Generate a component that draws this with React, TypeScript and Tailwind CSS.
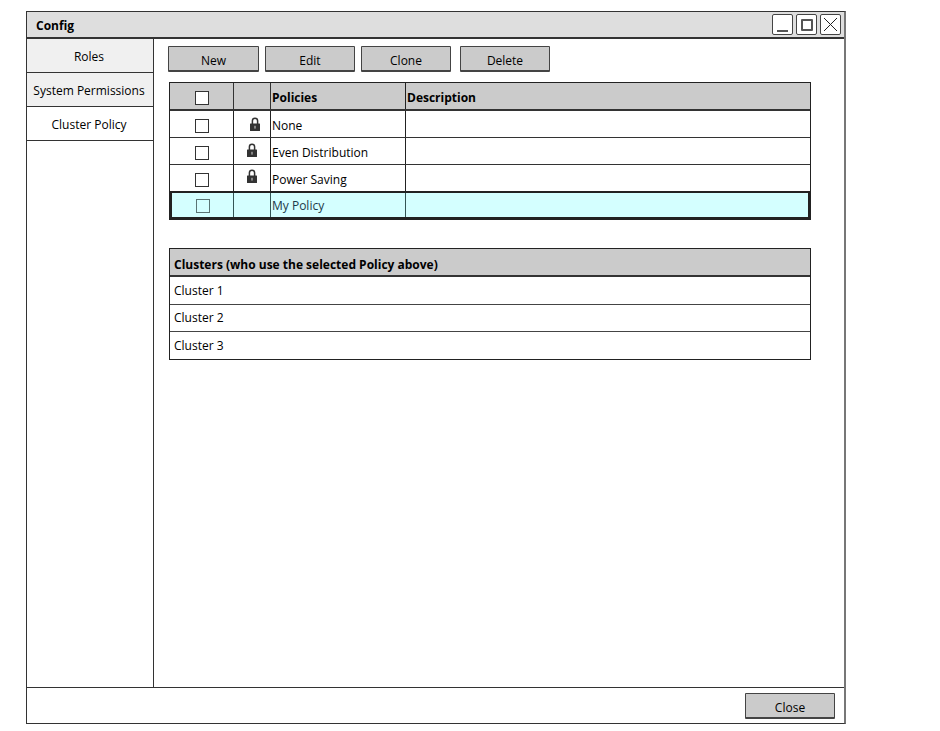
const font = 'font-["Open_Sans","Liberation_Sans",sans-serif]';

function Btn({ label, className = 'w-[91px]' }: { label: string; className?: string }) {
  return (
    <button className={`flex h-[26px] items-center justify-center rounded-[1px] border border-[#444] border-b-2 bg-[#cbcbcb] pt-[5px] text-[12px] text-black ${className}`}>
      {label}
    </button>
  );
}

function Check({ tint = false }: { tint?: boolean }) {
  return <span className={`block h-[14px] w-[14px] border ${tint ? 'border-[#5a7474] bg-[#d4ffff]' : 'border-[#333] bg-white'}`} />;
}

function LockIcon() {
  return (
    <svg width="10" height="14" viewBox="0 0 10 14" className="block">
      <path d="M2.4 7V3.8a2.6 2.6 0 0 1 5.2 0V7" fill="none" stroke="#333" strokeWidth="1.5" />
      <rect x="0" y="6.5" width="10" height="7.5" rx="0.5" fill="#333" />
      <rect x="4.2" y="8.8" width="1.6" height="2.8" fill="#999" />
    </svg>
  );
}

const policies = [
  { name: 'None', iconClass: 'ml-[5px]' },
  { name: 'Even Distribution', iconClass: '-mt-[2px]' },
  { name: 'Power Saving', iconClass: '-mt-[4px]' },
];

function WinButton({ children }: { children: React.ReactNode }) {
  return (
    <span className="flex h-[21px] w-[21px] items-center justify-center rounded-[2px] border border-[#444] bg-white">
      {children}
    </span>
  );
}

export default function App() {
  return (
    <div className={`h-[731px] w-[940px] bg-white pl-[26px] pt-[11px] ${font}`}>
      <div className="flex h-[713px] w-[820px] flex-col border border-[#333] border-r-2 border-r-[#777]">
        <div className="flex h-[27px] shrink-0 items-center justify-between border-b-2 border-[#333] bg-[#dedede] pl-[9px] pr-[3px]">
          <span className="pt-[2px] text-[12px] font-bold text-black">Config</span>
          <div className="flex gap-[3px]">
            <WinButton>
              <span className="mt-[12px] block h-[2px] w-[11px] bg-[#555]" />
            </WinButton>
            <WinButton>
              <span className="block h-[12px] w-[12px] rounded-[1px] border-2 border-[#555]" />
            </WinButton>
            <WinButton>
              <svg width="15" height="15" viewBox="0 0 15 15">
                <path d="M1 1l13 13M14 1L1 14" stroke="#222" strokeWidth="1" />
              </svg>
            </WinButton>
          </div>
        </div>

        <div className="flex min-h-0 flex-1">
          <div className="w-[127px] shrink-0 border-r border-[#333] text-[12px] text-black">
            <div className="flex h-[34px] items-center justify-center border-b border-[#333] bg-[#f0f0f0] pr-[2px] pt-[3px]">Roles</div>
            <div className="flex h-[34px] items-center justify-center border-b border-[#333] bg-[#f0f0f0] pr-[2px] pt-[3px]">System Permissions</div>
            <div className="flex h-[34px] items-center justify-center border-b border-[#333] bg-white pr-[2px] pt-[3px]">Cluster Policy</div>
          </div>

          <div className="flex-1 pl-[14px] pt-[7px]">
            <div className="flex">
              <Btn label="New" />
              <Btn label="Edit" className="ml-[6px] w-[90px]" />
              <Btn label="Clone" className="ml-[6px] w-[90px]" />
              <Btn label="Delete" className="ml-[9px] w-[90px]" />
            </div>

            <div className="ml-[1px] mt-[10px] w-[642px] border border-[#222] text-[12px] text-black">
              <div className="grid h-[28px] grid-cols-[64px_37px_135px_1fr] border-b-2 border-[#333] bg-[#cbcbcb] font-bold">
                <div className="flex items-center justify-center border-r border-[#333] pt-[4px]"><Check /></div>
                <div className="border-r border-[#333]" />
                <div className="flex items-center border-r border-[#222] pl-[1px] pt-[4px]">Policies</div>
                <div className="flex items-center pl-[1px] pt-[4px]">Description</div>
              </div>
              {policies.map((p) => (
                <div key={p.name} className="grid h-[27px] grid-cols-[64px_37px_135px_1fr] border-b border-[#333]">
                  <div className="flex items-center justify-center border-r border-[#222] pt-[3px]"><Check /></div>
                  <div className="flex items-center justify-center border-r border-[#222]">
                    <span className={p.iconClass}><LockIcon /></span>
                  </div>
                  <div className="flex items-center border-r border-[#222] pl-[1px] pt-[4px]">{p.name}</div>
                  <div />
                </div>
              ))}
              <div className="-mt-[1px] grid h-[28px] grid-cols-[62px_37px_135px_1fr] border-2 border-[#222] bg-[#d4ffff] text-[#1c3a4a]">
                <div className="flex items-center justify-center border-r border-[#355] pt-[2px]"><Check tint /></div>
                <div className="border-r border-[#355]" />
                <div className="flex items-center border-r border-[#355] pl-[1px] pt-[2px]">My Policy</div>
                <div />
              </div>
            </div>

            <div className="ml-[1px] mt-[28px] w-[642px] border border-[#222] text-[12px] text-black">
              <div className="flex h-[28px] items-center border-b-2 border-[#333] bg-[#cbcbcb] pl-[4px] pt-[5px] font-bold">
                Clusters (who use the selected Policy above)
              </div>
              <div className="flex h-[28px] items-center border-b border-[#444] pl-[4px]">Cluster 1</div>
              <div className="flex h-[27px] items-center border-b border-[#444] pl-[4px]">Cluster 2</div>
              <div className="flex h-[27px] items-center pl-[4px]">Cluster 3</div>
            </div>
          </div>
        </div>

        <div className="flex h-[36px] shrink-0 items-center justify-end border-t border-[#333] pr-[9px]">
          <Btn label="Close" className="w-[90px]" />
        </div>
      </div>
    </div>
  );
}
